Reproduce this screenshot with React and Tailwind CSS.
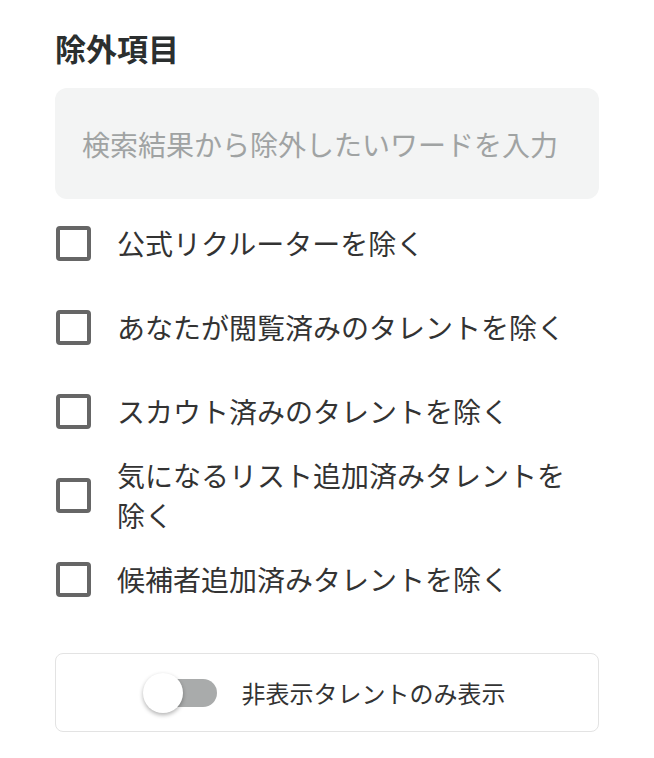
import { useState } from "react";

const options = [
    "公式リクルーターを除く",
    "あなたが閲覧済みのタレントを除く",
    "スカウト済みのタレントを除く",
    "気になるリスト追加済みタレントを除く",
    "候補者追加済みタレントを除く",
];

export default function App() {
    const [checked, setChecked] = useState(options.map(() => false));
    const [hiddenOnly, setHiddenOnly] = useState(false);

    function toggle(index) {
        setChecked(checked.map((value, i) => (i === index ? !value : value)));
    }

    return (
        <div className="min-h-[758px] bg-white px-[55px] pt-[27px] font-['Noto_Sans_CJK_JP','Noto_Sans',sans-serif] text-[#333]">
            <h2 className="text-[31px] font-bold leading-[42px] text-[#2b2f2f]">除外項目</h2>

            <input
                type="text"
                placeholder="検索結果から除外したいワードを入力"
                className="mt-[19px] block h-[111px] w-full rounded-[12px] bg-[#f3f4f4] px-[27px] text-[28px] text-[#333] outline-none placeholder:text-[#a0a3a3]"
            />

            <div className="mt-[2px]">
                {options.map((label, index) => (
                    <label key={label} className="flex h-[84px] cursor-pointer items-center gap-[26px]">
                        <span
                            onClick={() => toggle(index)}
                            className={`ml-[1px] flex h-[35px] w-[35px] shrink-0 items-center justify-center rounded-[4px] border-[4px] ${checked[index] ? "border-[#2b8a8a] bg-[#2b8a8a]" : "border-[#666]"}`}
                        >
                            {checked[index] && (
                                <svg viewBox="0 0 24 24" className="h-6 w-6" fill="none" stroke="white" strokeWidth="3">
                                    <path d="M5 12l5 5 9-10" />
                                </svg>
                            )}
                        </span>
                        <span className="flex-1 pr-[12px] text-[28px] leading-[40px]">{label}</span>
                    </label>
                ))}
            </div>

            <div className="mt-[32px] flex h-[79px] items-center justify-center gap-[25px] rounded-[8px] border border-[#e3e3e3]">
                <button
                    onClick={() => setHiddenOnly(!hiddenOnly)}
                    className={`relative h-[28px] w-[68px] rounded-full ${hiddenOnly ? "bg-[#9cd3d3]" : "bg-[#a9abab]"}`}
                >
                    <span
                        className={`absolute top-[-6px] h-[40px] w-[40px] rounded-full bg-white shadow-[0_2px_4px_rgba(0,0,0,0.3)] ${hiddenOnly ? "left-[34px]" : "left-[-6px]"}`}
                    />
                </button>
                <span className="text-[24px] leading-[34px] text-[#333]">非表示タレントのみ表示</span>
            </div>
        </div>
    );
}
